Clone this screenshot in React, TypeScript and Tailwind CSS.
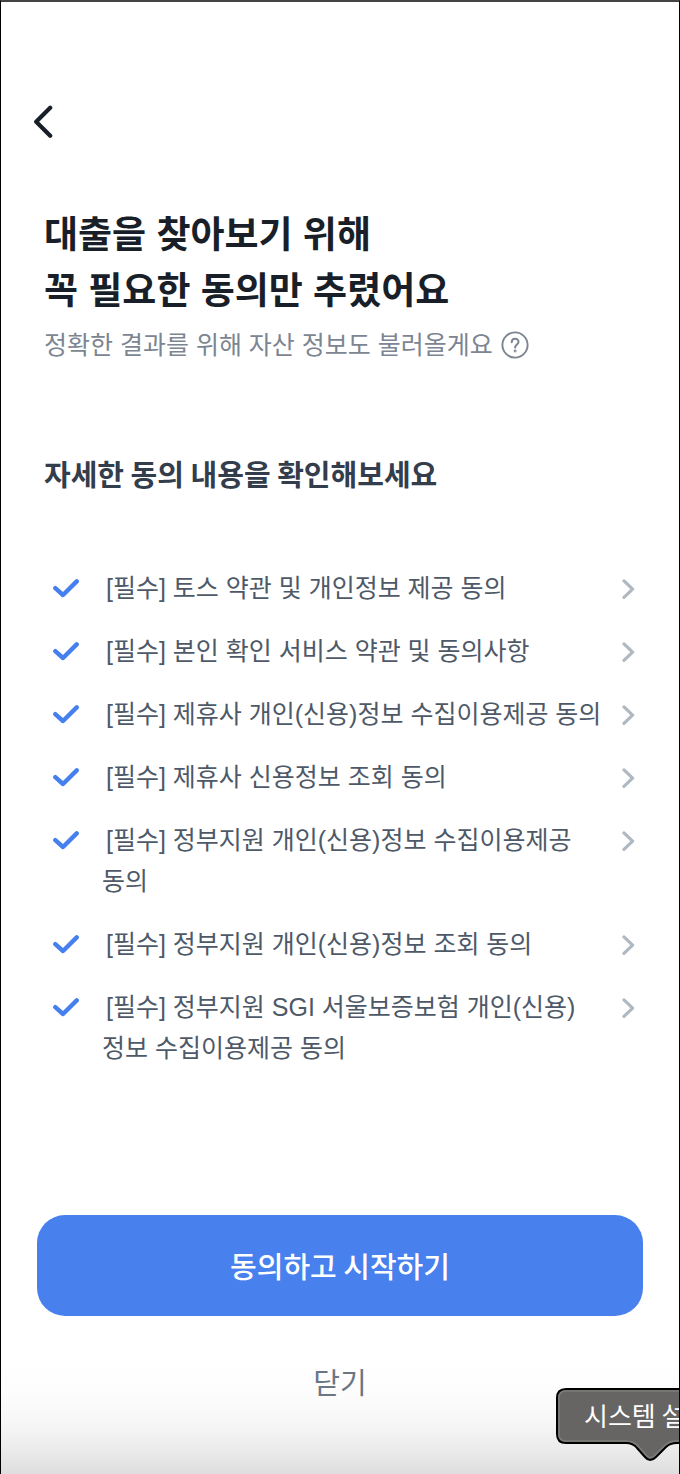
const terms: string[] = [
  '[필수] 토스 약관 및 개인정보 제공 동의',
  '[필수] 본인 확인 서비스 약관 및 동의사항',
  '[필수] 제휴사 개인(신용)정보 수집이용제공 동의',
  '[필수] 제휴사 신용정보 조회 동의',
  '[필수] 정부지원 개인(신용)정보 수집이용제공 동의',
  '[필수] 정부지원 개인(신용)정보 조회 동의',
  '[필수] 정부지원 SGI 서울보증보험 개인(신용)정보 수집이용제공 동의',
];

function TermRow({ label }: { label: string }) {
  return (
    <li>
      <a href="#terms" className="flex items-start">
        <svg viewBox="0 0 28 20" className="mt-2.5 h-5 w-7 shrink-0" fill="none" stroke="#4680ee" strokeWidth="4.4" strokeLinecap="round" strokeLinejoin="round" aria-hidden="true">
          <path d="M3.3 10.2 L11 17 L24.7 3.4" />
        </svg>
        <span className="ml-[22px] flex-1 pr-3 indent-1 text-[25px] leading-[41px] text-[#4e5968]">{label}</span>
        <svg viewBox="0 0 14 20" className="mt-[11px] h-5 w-3.5 shrink-0" fill="none" stroke="#b0b8c1" strokeWidth="3.2" strokeLinecap="round" strokeLinejoin="round" aria-hidden="true">
          <path d="M2 1.9 L10.6 10.2 L2 18.4" />
        </svg>
      </a>
    </li>
  );
}

function SystemTooltip() {
  return (
    <div role="tooltip" className="absolute top-[1386px] left-[554px] h-[73px] w-[190px]">
      <svg viewBox="0 0 190 73" className="absolute inset-0 h-full w-full" aria-hidden="true">
        <path d="M11 1 H179 Q188 1 188 10 V46 Q188 55 179 55 H122 Q115 55 111 59 Q105 65 101 69 Q95 75 90 69 L82 60 Q78 55 71 55 H11 Q2 55 2 46 V10 Q2 1 11 1 Z" fill="#666563" stroke="#000" strokeWidth="2" />
        <path d="M11 3 H179 Q186 3 186 10 V46 Q186 53 179 53 H122 Q114 53 109 58 L99 68 Q95 71 92 68 L84 59 Q79 53 71 53 H11 Q4 53 4 46 V10 Q4 3 11 3 Z" fill="none" stroke="#7d7c7a" strokeWidth="1.5" />
      </svg>
      <span className="relative block pt-2 pl-[29px] font-['Noto_Sans_CJK_KR',sans-serif] text-[26px] leading-[38px] whitespace-nowrap text-white">시스템 설정</span>
    </div>
  );
}

export default function App() {
  return (
    <div className="relative min-h-screen overflow-hidden border-x border-t-2 border-x-black border-t-[#454344] bg-white font-['Liberation_Sans','Noto_Sans_CJK_KR',sans-serif] break-keep">
      <div className="flex min-h-[1472px] flex-col bg-[linear-gradient(to_top,#dedede_0px,#ebebeb_24px,#f7f7f7_52px,#fdfdfd_84px,#ffffff_110px)]">
        <header className="px-8 pt-[103px]">
          <button type="button" aria-label="뒤로" className="block">
            <svg viewBox="0 0 20 34" className="h-[34px] w-5" fill="none" stroke="#191f28" strokeWidth="4.2" strokeLinecap="round" strokeLinejoin="round" aria-hidden="true">
              <path d="M17.2 2.8 L3.2 16.8 L17.2 30.8" />
            </svg>
          </button>
        </header>

        <main className="px-[43px] pt-[69px]">
          <h1 className="text-[37px] leading-[56px] font-bold text-[#191f28]">
            대출을 찾아보기 위해
            <br />꼭 필요한 동의만 추렸어요
          </h1>
          <p className="mt-[5px] flex items-center gap-2 text-[25px] leading-[40px] text-[#7c8591]">
            정확한 결과를 위해 자산 정보도 불러올게요
            <button type="button" aria-label="도움말">
              <svg viewBox="0 0 28 28" className="block size-7" fill="none" stroke="#7c8591" strokeWidth="1.9" strokeLinecap="round" strokeLinejoin="round" aria-hidden="true">
                <circle cx="14" cy="14" r="12.6" />
                <path d="M10.7 11.2 C10.9 6.6 17.6 6.8 17.5 11 C17.4 13.5 14.2 13.7 14.1 16.6" strokeWidth="2" />
                <circle cx="14.1" cy="20" r="0.5" />
              </svg>
            </button>
          </p>

          <h2 className="mt-[86px] font-['Noto_Sans_CJK_KR',sans-serif] text-[29px] leading-[44px] font-bold text-[#333d4b]">자세한 동의 내용을 확인해보세요</h2>

          <ul className="mt-[73px] flex flex-col gap-[22px] pl-2">
            {terms.map((label) => (
              <TermRow key={label} label={label} />
            ))}
          </ul>
        </main>

        <footer className="flex flex-col items-center px-9 pt-[146px] font-['Noto_Sans_CJK_KR',sans-serif]">
          <button type="button" className="h-[101px] w-full rounded-[28px] bg-[#4880ee] text-[29px] font-medium text-white">
            동의하고 시작하기
          </button>
          <button type="button" className="mt-[43px] text-[29px] leading-[44px] text-[#6b7684]">
            닫기
          </button>
        </footer>
      </div>
      <SystemTooltip />
    </div>
  );
}
